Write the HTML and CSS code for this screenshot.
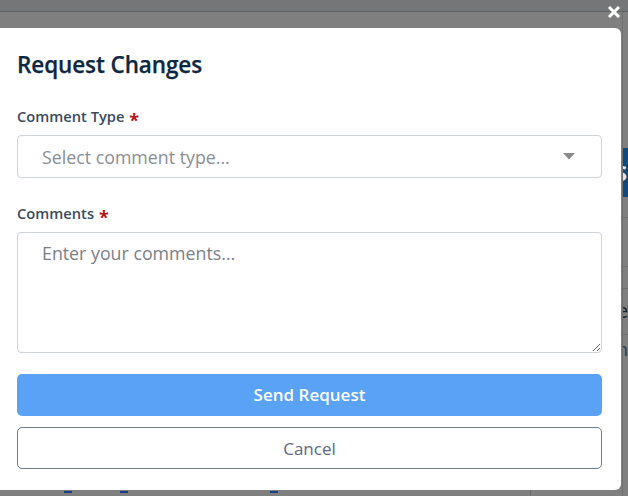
FILE: index.html
```
<!DOCTYPE html>
<html lang="en">
<head>
<meta charset="utf-8">
<title>Request Changes</title>
<link rel="stylesheet" href="styles.css">
</head>
<body>
<div class="page">
  <header class="topbar"></header>
  <div class="page-body">
    <main class="main-col">
      <div class="link-row">
        <span class="link-mark"></span>
        <span class="link-mark"></span>
        <span class="link-mark wide"></span>
      </div>
    </main>
    <aside class="side-col"></aside>
    <aside class="side-panel">
      <div class="side-head"><span class="peek">S</span></div>
      <div class="side-row r1"></div>
      <div class="side-row r2"></div>
      <div class="side-row r3"></div>
      <div class="side-row r4"><span class="peek">e</span></div>
      <div class="side-row r5"><span class="peek">n</span></div>
    </aside>
  </div>
</div>

<div class="overlay">
  <button class="close" aria-label="Close">
    <svg width="14" height="14" viewBox="0 0 14 14"><path d="M2 2 L12 12 M12 2 L2 12" stroke="#fff" stroke-width="3" stroke-linecap="butt"/></svg>
  </button>
  <div class="modal">
    <h2 class="modal-title">Request Changes</h2>
    <div class="field">
      <label class="field-label">Comment Type <span class="req">*</span></label>
      <div class="select-box">
        <span class="placeholder">Select comment type...</span>
        <svg class="caret" width="12" height="7" viewBox="0 0 12 7"><path d="M0 0 H12 L6 6.5 Z" fill="#8a8a8a"/></svg>
      </div>
    </div>
    <div class="field">
      <label class="field-label">Comments <span class="req">*</span></label>
      <textarea class="text-area" placeholder="Enter your comments..."></textarea>
    </div>
    <div class="actions">
      <button class="btn btn-primary">Send Request</button>
      <button class="btn btn-outline">Cancel</button>
    </div>
  </div>
</div>
</body>
</html>
```

FILE: styles.css
```
* { box-sizing: border-box; }
html, body { margin: 0; padding: 0; }
body {
  width: 628px;
  height: 496px;
  overflow: hidden;
  background: #7f7f7f;
  font-family: "Open Sans", "Noto Sans", sans-serif;
}

/* dimmed page underneath */
.page { height: 496px; display: flex; flex-direction: column; }
.topbar {
  height: 12px;
  background: #747677;
  border-bottom: 1px solid #5f6364;
  flex: none;
}
.page-body {
  flex: 1;
  display: grid;
  grid-template-columns: 530px 92px 1fr;
}
.main-col { display: flex; flex-direction: column; justify-content: flex-end; }
.link-row { display: flex; height: 6px; align-items: flex-start; padding-left: 64px; gap: 48px; }
.link-mark { width: 8px; height: 2px; margin-top: 1px; background: #1c3f86; }
.link-mark.wide { margin-left: 94px; }
.side-col { border-left: 1px solid #6b6b6b; margin-top: 80px; }
.side-panel { border-left: 1px solid #6f6f6f; padding-top: 136px; overflow: hidden; }
.side-head {
  height: 49px; background: #0c4a80; color: #dfe6ee;
  font-size: 22px; font-weight: 700; line-height: 49px;
}
.side-row { border-bottom: 1px solid #6f6f6f; color: #1e1e1e; font-size: 20px; }
.peek { display: inline-block; margin-left: -8px; }
.side-row.r1 { height: 21px; }
.side-row.r2 { height: 49px; }
.side-row.r3 { height: 22px; }
.side-row.r4 { height: 46px; line-height: 44px; }
.side-row.r4 .peek { margin-left: -6px; }
.side-row.r5 { border: 0; color: #2a3a50; font-size: 18px; line-height: 28px; }
.side-row.r5 .peek { margin-left: -6px; }

/* modal layer */
.overlay {
  position: fixed;
  inset: 0;
  padding-top: 28px;
}
.close {
  position: absolute;
  top: 4px;
  left: 606px;
  width: 16px; height: 16px;
  padding: 0; border: 0; background: none;
  display: flex; align-items: center; justify-content: center;
}
.modal {
  width: 621px;
  height: 462px;
  background: #fff;
  border-radius: 0 6px 6px 0;
  padding: 23px 19px 21px 17px;
  display: flex;
  flex-direction: column;
}
.modal-title {
  margin: 0;
  font-size: 22.5px;
  line-height: 27px;
  font-weight: 600;
  color: #0d2843;
  letter-spacing: -0.1px;
  -webkit-text-stroke: 0.25px #0d2843;
}
.field { display: flex; flex-direction: column; gap: 8px; }
.field:first-of-type { margin-top: 28px; }
.field + .field { margin-top: 25px; }
.field-label {
  font-size: 14.7px;
  line-height: 21px;
  font-weight: 600;
  color: #3a4b5c;
}
.req { color: #b5151b; font-size: 18px; font-weight: 700; line-height: 14px; vertical-align: -5px; margin-left: 1px; }
.select-box {
  height: 43px;
  border: 1px solid #cfd4da;
  border-radius: 4px;
  padding: 1px 26px 0 24px;
  display: flex;
  align-items: center;
  justify-content: space-between;
}
.caret { margin-top: -1px; }
.placeholder { font-size: 17.8px; color: #8a8e93; line-height: 25px; }
.text-area {
  display: block;
  width: 100%;
  height: 121px;
  border: 1px solid #cfd4da;
  border-radius: 4px;
  padding: 8px 24px 6px;
  font-family: inherit;
  font-size: 17.8px;
  line-height: 25px;
  color: #333;
  resize: vertical;
}
.text-area::placeholder { color: #7b8086; }
.actions { margin-top: 21px; display: flex; flex-direction: column; gap: 11px; }
.btn {
  height: 42px;
  width: 100%;
  border-radius: 5px;
  font-family: inherit;
  font-size: 17px;
  cursor: pointer;
}
.btn-primary { background: #5aa2f5; border: 0; color: #fff; font-weight: 600; padding-bottom: 2px; }
.btn-outline { background: #fff; border: 1px solid #6e7b89; color: #5b6b7b; padding-bottom: 1px; }
```
